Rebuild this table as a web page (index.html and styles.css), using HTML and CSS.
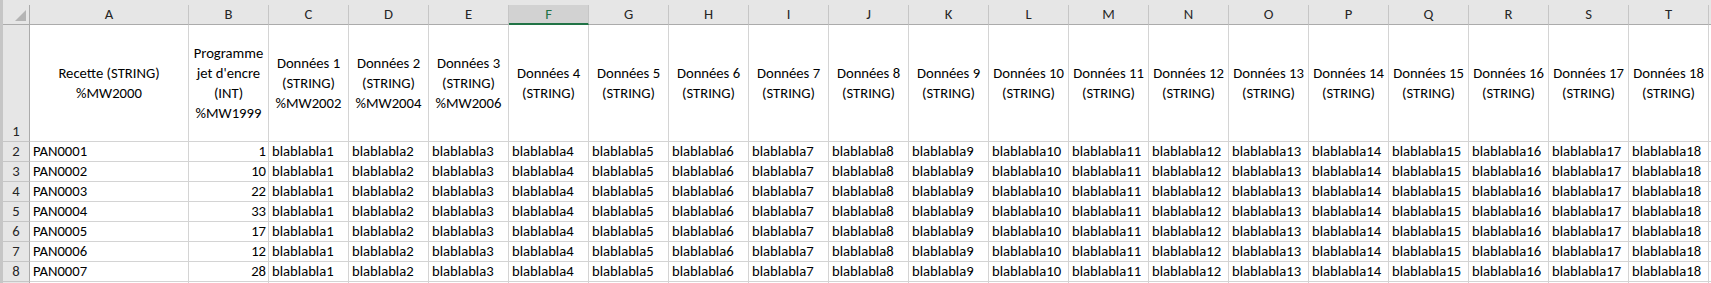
FILE: index.html
```html
<!DOCTYPE html>
<html lang="fr">
<head>
<meta charset="utf-8">
<title>Feuille</title>
<link rel="stylesheet" href="styles.css">
</head>
<body>
<div class="window">
  <div class="sheet">
    <div class="corner"><span class="tri"></span></div>
    <div class="colhdr">A</div><div class="colhdr">B</div><div class="colhdr">C</div><div class="colhdr">D</div><div class="colhdr">E</div><div class="colhdr sel">F</div><div class="colhdr">G</div><div class="colhdr">H</div><div class="colhdr">I</div><div class="colhdr">J</div><div class="colhdr">K</div><div class="colhdr">L</div><div class="colhdr">M</div><div class="colhdr">N</div><div class="colhdr">O</div><div class="colhdr">P</div><div class="colhdr">Q</div><div class="colhdr">R</div><div class="colhdr">S</div><div class="colhdr">T</div><div class="colhdr"></div>

    <div class="rowhdr">1</div>
    <div class="cell head">Recette (STRING)<br>%MW2000</div>
    <div class="cell head">Programme<br>jet d'encre<br>(INT)<br>%MW1999</div>
    <div class="cell head">Données 1<br>(STRING)<br>%MW2002</div>
    <div class="cell head">Données 2<br>(STRING)<br>%MW2004</div>
    <div class="cell head">Données 3<br>(STRING)<br>%MW2006</div>
    <div class="cell head">Données 4<br>(STRING)</div>
    <div class="cell head">Données 5<br>(STRING)</div>
    <div class="cell head">Données 6<br>(STRING)</div>
    <div class="cell head">Données 7<br>(STRING)</div>
    <div class="cell head">Données 8<br>(STRING)</div>
    <div class="cell head">Données 9<br>(STRING)</div>
    <div class="cell head">Données 10<br>(STRING)</div>
    <div class="cell head">Données 11<br>(STRING)</div>
    <div class="cell head">Données 12<br>(STRING)</div>
    <div class="cell head">Données 13<br>(STRING)</div>
    <div class="cell head">Données 14<br>(STRING)</div>
    <div class="cell head">Données 15<br>(STRING)</div>
    <div class="cell head">Données 16<br>(STRING)</div>
    <div class="cell head">Données 17<br>(STRING)</div>
    <div class="cell head">Données 18<br>(STRING)</div>
    <div class="cell"></div>

    <div class="rowhdr">2</div><div class="cell">PAN0001</div><div class="cell num">1</div><div class="cell">blablabla1</div><div class="cell">blablabla2</div><div class="cell">blablabla3</div><div class="cell">blablabla4</div><div class="cell">blablabla5</div><div class="cell">blablabla6</div><div class="cell">blablabla7</div><div class="cell">blablabla8</div><div class="cell">blablabla9</div><div class="cell">blablabla10</div><div class="cell">blablabla11</div><div class="cell">blablabla12</div><div class="cell">blablabla13</div><div class="cell">blablabla14</div><div class="cell">blablabla15</div><div class="cell">blablabla16</div><div class="cell">blablabla17</div><div class="cell">blablabla18</div><div class="cell"></div>

    <div class="rowhdr">3</div><div class="cell">PAN0002</div><div class="cell num">10</div><div class="cell">blablabla1</div><div class="cell">blablabla2</div><div class="cell">blablabla3</div><div class="cell">blablabla4</div><div class="cell">blablabla5</div><div class="cell">blablabla6</div><div class="cell">blablabla7</div><div class="cell">blablabla8</div><div class="cell">blablabla9</div><div class="cell">blablabla10</div><div class="cell">blablabla11</div><div class="cell">blablabla12</div><div class="cell">blablabla13</div><div class="cell">blablabla14</div><div class="cell">blablabla15</div><div class="cell">blablabla16</div><div class="cell">blablabla17</div><div class="cell">blablabla18</div><div class="cell"></div>

    <div class="rowhdr">4</div><div class="cell">PAN0003</div><div class="cell num">22</div><div class="cell">blablabla1</div><div class="cell">blablabla2</div><div class="cell">blablabla3</div><div class="cell">blablabla4</div><div class="cell">blablabla5</div><div class="cell">blablabla6</div><div class="cell">blablabla7</div><div class="cell">blablabla8</div><div class="cell">blablabla9</div><div class="cell">blablabla10</div><div class="cell">blablabla11</div><div class="cell">blablabla12</div><div class="cell">blablabla13</div><div class="cell">blablabla14</div><div class="cell">blablabla15</div><div class="cell">blablabla16</div><div class="cell">blablabla17</div><div class="cell">blablabla18</div><div class="cell"></div>

    <div class="rowhdr">5</div><div class="cell">PAN0004</div><div class="cell num">33</div><div class="cell">blablabla1</div><div class="cell">blablabla2</div><div class="cell">blablabla3</div><div class="cell">blablabla4</div><div class="cell">blablabla5</div><div class="cell">blablabla6</div><div class="cell">blablabla7</div><div class="cell">blablabla8</div><div class="cell">blablabla9</div><div class="cell">blablabla10</div><div class="cell">blablabla11</div><div class="cell">blablabla12</div><div class="cell">blablabla13</div><div class="cell">blablabla14</div><div class="cell">blablabla15</div><div class="cell">blablabla16</div><div class="cell">blablabla17</div><div class="cell">blablabla18</div><div class="cell"></div>

    <div class="rowhdr">6</div><div class="cell">PAN0005</div><div class="cell num">17</div><div class="cell">blablabla1</div><div class="cell">blablabla2</div><div class="cell">blablabla3</div><div class="cell">blablabla4</div><div class="cell">blablabla5</div><div class="cell">blablabla6</div><div class="cell">blablabla7</div><div class="cell">blablabla8</div><div class="cell">blablabla9</div><div class="cell">blablabla10</div><div class="cell">blablabla11</div><div class="cell">blablabla12</div><div class="cell">blablabla13</div><div class="cell">blablabla14</div><div class="cell">blablabla15</div><div class="cell">blablabla16</div><div class="cell">blablabla17</div><div class="cell">blablabla18</div><div class="cell"></div>

    <div class="rowhdr">7</div><div class="cell">PAN0006</div><div class="cell num">12</div><div class="cell">blablabla1</div><div class="cell">blablabla2</div><div class="cell">blablabla3</div><div class="cell">blablabla4</div><div class="cell">blablabla5</div><div class="cell">blablabla6</div><div class="cell">blablabla7</div><div class="cell">blablabla8</div><div class="cell">blablabla9</div><div class="cell">blablabla10</div><div class="cell">blablabla11</div><div class="cell">blablabla12</div><div class="cell">blablabla13</div><div class="cell">blablabla14</div><div class="cell">blablabla15</div><div class="cell">blablabla16</div><div class="cell">blablabla17</div><div class="cell">blablabla18</div><div class="cell"></div>

    <div class="rowhdr">8</div><div class="cell">PAN0007</div><div class="cell num">28</div><div class="cell">blablabla1</div><div class="cell">blablabla2</div><div class="cell">blablabla3</div><div class="cell">blablabla4</div><div class="cell">blablabla5</div><div class="cell">blablabla6</div><div class="cell">blablabla7</div><div class="cell">blablabla8</div><div class="cell">blablabla9</div><div class="cell">blablabla10</div><div class="cell">blablabla11</div><div class="cell">blablabla12</div><div class="cell">blablabla13</div><div class="cell">blablabla14</div><div class="cell">blablabla15</div><div class="cell">blablabla16</div><div class="cell">blablabla17</div><div class="cell">blablabla18</div><div class="cell"></div>

    <div class="rowhdr"></div><div class="cell"></div><div class="cell"></div><div class="cell"></div><div class="cell"></div><div class="cell"></div><div class="cell"></div><div class="cell"></div><div class="cell"></div><div class="cell"></div><div class="cell"></div><div class="cell"></div><div class="cell"></div><div class="cell"></div><div class="cell"></div><div class="cell"></div><div class="cell"></div><div class="cell"></div><div class="cell"></div><div class="cell"></div><div class="cell"></div><div class="cell"></div>
  </div>
</div>
</body>
</html>
```

FILE: styles.css
```css
html, body {
  margin: 0;
  padding: 0;
  background: #e6e6e6;
}

.window {
  width: 1711px;
  height: 283px;
  overflow: hidden;
  box-sizing: border-box;
  border-left: 3px solid #c6c6c6;
  padding-top: 5px;
  background: #e6e6e6;
  font-family: Carlito, Calibri, "Liberation Sans", sans-serif;
  font-size: 14.67px;
  color: #000;
}

.sheet {
  display: grid;
  grid-template-columns: 27px 159px repeat(20, 80px);
  grid-template-rows: 20px 117px repeat(8, 20px);
  width: max-content;
  background: #fff;
}

.sheet > div {
  box-sizing: border-box;
  white-space: nowrap;
  overflow: hidden;
}

.corner {
  background: #e6e6e6;
  border-right: 1px solid #ababab;
  border-bottom: 1px solid #ababab;
  display: flex;
  justify-content: flex-end;
  align-items: flex-end;
  padding: 0 3px 3px 0;
}

.tri {
  width: 11px;
  height: 11px;
  background: #b4b4b4;
  clip-path: polygon(100% 0, 100% 100%, 0 100%);
}

.colhdr {
  background: #e6e6e6;
  border-right: 1px solid #c6c6c6;
  border-bottom: 1px solid #ababab;
  color: #262626;
  display: flex;
  align-items: center;
  justify-content: center;
  line-height: 19px;
}

.colhdr.sel {
  background: #d2d2d2;
  color: #217346;
  border-bottom: 2px solid #217346;
  padding-top: 1px;
}

.rowhdr {
  background: #e6e6e6;
  border-right: 1px solid #ababab;
  border-bottom: 1px solid #c6c6c6;
  color: #262626;
  display: flex;
  align-items: flex-end;
  justify-content: center;
  line-height: 19px;
}

.cell {
  border-right: 1px solid #d4d4d4;
  border-bottom: 1px solid #d4d4d4;
  display: flex;
  align-items: flex-end;
  padding: 0 2px 0 3px;
  line-height: 19px;
}

.cell.num {
  justify-content: flex-end;
}

.cell.head {
  align-items: center;
  justify-content: center;
  text-align: center;
  line-height: 20px;
  padding: 0 1px;
}
```
